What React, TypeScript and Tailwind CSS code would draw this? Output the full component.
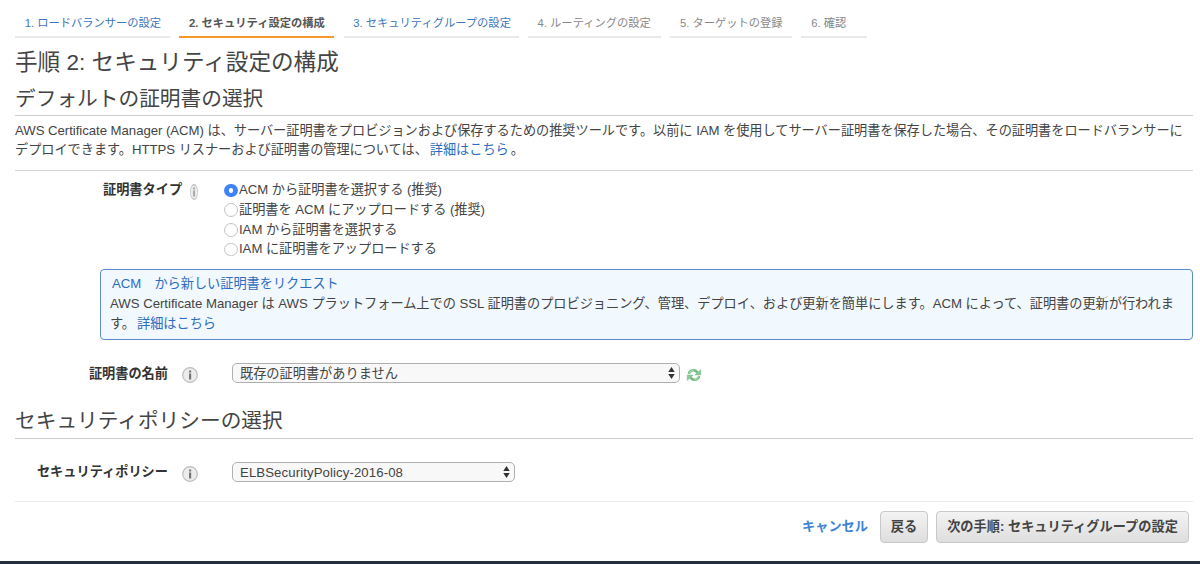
import { clsx } from "clsx";

const STEPS = [
  { label: "1. ロードバランサーの設定", state: "link", width: "w-[155px]" },
  { label: "2. セキュリティ設定の構成", state: "active", width: "w-[155px]" },
  { label: "3. セキュリティグループの設定", state: "link", width: "w-[175px]" },
  { label: "4. ルーティングの設定", state: "todo", width: "w-[133px]" },
  { label: "5. ターゲットの登録", state: "todo", width: "w-[122px]" },
  { label: "6. 確認", state: "todo", width: "w-[66px]" },
];

const CERT_TYPES = [
  "ACM から証明書を選択する (推奨)",
  "証明書を ACM にアップロードする (推奨)",
  "IAM から証明書を選択する",
  "IAM に証明書をアップロードする",
];

function InfoIcon({ className }: { className: string }) {
  return (
    <svg viewBox="0 0 16 16" preserveAspectRatio="none" className={className}>
      <circle cx="8" cy="8" r="7.3" fill="#ececec" stroke="#bdbdbd" strokeWidth="1.2" />
      <path d="M7 3.600h2.200v1.800H7zM7 6.500h2.200v6H7z" fill="#777" />
    </svg>
  );
}

function RefreshIcon() {
  return (
    <svg viewBox="0 0 16 16" className="ml-[6px] mt-[4px] h-4 w-4">
      <g fill="none" stroke="#72bd85" strokeWidth="2.600">
        <path d="M2.800 7C3.500 4.200 5.400 3.200 7.500 3.200c2 0 3.200 1 4 2.600" />
        <path d="M13.200 9c-.7 2.800-2.600 3.800-4.700 3.800-2 0-3.200-1-4-2.600" />
      </g>
      <path d="M14.800 2.600v5.300H8.800zM1.200 13.400V8.100h6z" fill="#8bcb9a" stroke="#72bd85" strokeWidth="0.500" />
      <path d="M3.200 6.600C3.900 4.500 5.500 3.300 7.500 3.300M12.800 9.400c-.7 2.100-2.300 3.300-4.300 3.300" fill="none" stroke="#b5e2bf" strokeWidth="0.900" />
    </svg>
  );
}

function SelectBox({ value, width }: { value: string; width: string }) {
  return (
    <button
      className={clsx(
        "flex h-[20px] items-center justify-between rounded-[5px] border border-[#b0b0b0] bg-[#f8f8f8] pl-[7px] pr-[4px]",
        width
      )}
    >
      <span className="whitespace-nowrap leading-[19px]">{value}</span>
      <svg viewBox="0 0 7 13" className="h-[12px] w-[7px]" fill="#333">
        <path d="M3.500 0L7 5.500H0zM3.500 13L7 7.500H0z" />
      </svg>
    </button>
  );
}

export default function App() {
  return (
    <div className="flex h-[564px] w-[1200px] flex-col overflow-hidden bg-white font-['Liberation_Sans','Noto_Sans_CJK_JP',sans-serif] text-[13.2px] leading-[19.8px] text-[#444]">
      <div className="flex-1 pl-[15px] pr-[7px]">
        <nav className="flex gap-[9.3px] pt-[8px] text-[11.27px]">
          {STEPS.map((s) => (
            <div
              key={s.label}
              className={clsx(
                "h-[30px] shrink-0 whitespace-nowrap border-b-2 pl-[9.7px]",
                s.width,
                s.state === "active" && "border-[#f7982e] font-bold leading-[31px] text-[#555]",
                s.state === "link" && "border-[#eaeaea] leading-[30px] text-[#3b77bd]",
                s.state === "todo" && "border-[#eaeaea] leading-[30px] text-[#888]"
              )}
            >
              {s.label}
            </div>
          ))}
        </nav>

        <h1 className="mt-[8px] h-[34px] whitespace-nowrap text-[22.6px] leading-[34px]">
          手順 2: セキュリティ設定の構成
        </h1>
        <h2 className="h-[36px] whitespace-nowrap border-b border-[#ccc] text-[20.7px] leading-[37px]">
          デフォルトの証明書の選択
        </h2>

        <p className="h-[55px] whitespace-nowrap border-b border-[#d5d5d5] pt-[5px] leading-[19.4px] tracking-[-0.04px]">
          AWS Certificate Manager (ACM) は、サーバー証明書をプロビジョンおよび保存するための推奨ツールです。以前に IAM を使用してサーバー証明書を保存した場合、その証明書をロードバランサーに
          <br />
          デプロイできます。HTTPS リスナーおよび証明書の管理については、
          <a className="ml-[2px] mr-[2px] text-[#2d6cc0]">詳細はこちら</a>。
        </p>

        <div className="mt-[9px] flex">
          <div className="flex w-[209px] pl-[88px]">
            <span className="font-bold text-[#333]">証明書タイプ</span>
            <InfoIcon className="ml-[8px] mt-[4px] h-4 w-2" />
          </div>
          <div className="tracking-[-0.04px]">
            {CERT_TYPES.map((label, i) => (
              <label key={label} className="flex whitespace-nowrap">
                <span
                  className={clsx(
                    "mr-[1.5px] mt-[3.5px] flex h-[13.5px] w-[13.5px] items-center justify-center rounded-full",
                    i === 0 ? "bg-[#3f83f8]" : "border border-[#c4c4c4] bg-white"
                  )}
                >
                  {i === 0 && <span className="h-[4.5px] w-[4.5px] rounded-full bg-white" />}
                </span>
                {label}
              </label>
            ))}
          </div>
        </div>

        <div className="ml-[85px] mt-[10px] h-[71px] whitespace-nowrap rounded-[4px] border border-[#5b8ccf] bg-[#f1f8fe] pl-[9px] pt-[4px] tracking-[-0.02px]">
          <a className="pl-[2px] text-[#2d6cc0]">ACM　から新しい証明書をリクエスト</a>
          <br />
          AWS Certificate Manager は AWS プラットフォーム上での SSL 証明書のプロビジョニング、管理、デプロイ、および更新を簡単にします。ACM によって、証明書の更新が行われま
          <br />
          す。<a className="ml-[2px] text-[#2d6cc0]">詳細はこちら</a>
        </div>

        <div className="mt-[23px] flex h-[21px]">
          <span className="w-[153px] pt-px text-right font-bold text-[#333]">証明書の名前</span>
          <InfoIcon className="ml-[14px] mr-[34px] mt-[4px] h-4 w-4" />
          <SelectBox value="既存の証明書がありません" width="w-[448px]" />
          <RefreshIcon />
        </div>

        <h2 className="mt-[18px] h-[37px] whitespace-nowrap border-b border-[#ccc] pt-px text-[20.7px] leading-[36px]">
          セキュリティポリシーの選択
        </h2>

        <div className="mt-[23px] flex h-[21px]">
          <span className="w-[153px] text-right font-bold text-[#333]">セキュリティポリシー</span>
          <InfoIcon className="ml-[14px] mr-[34px] mt-[4px] h-4 w-4" />
          <SelectBox value="ELBSecurityPolicy-2016-08" width="w-[283px] tracking-[0.1px]" />
        </div>

        <div className="mt-[18px] flex items-start justify-end border-t border-[#eaeaea] pr-[4px] pt-[9px] font-bold">
          <a className="mr-[12px] leading-[31px] text-[#3f83d6]">キャンセル</a>
          <button className="mr-[8px] h-[32px] w-[48px] rounded-[4px] border border-[#c8c8c8] bg-linear-to-b from-[#f3f3f3] to-[#dedede] leading-[30px]">
            戻る
          </button>
          <button className="h-[32px] w-[253px] whitespace-nowrap rounded-[4px] border border-[#c8c8c8] bg-linear-to-b from-[#f3f3f3] to-[#dedede] leading-[30px]">
            次の手順: セキュリティグループの設定
          </button>
        </div>
      </div>
      <footer className="h-[3px] bg-[#232f3e]" />
    </div>
  );
}
